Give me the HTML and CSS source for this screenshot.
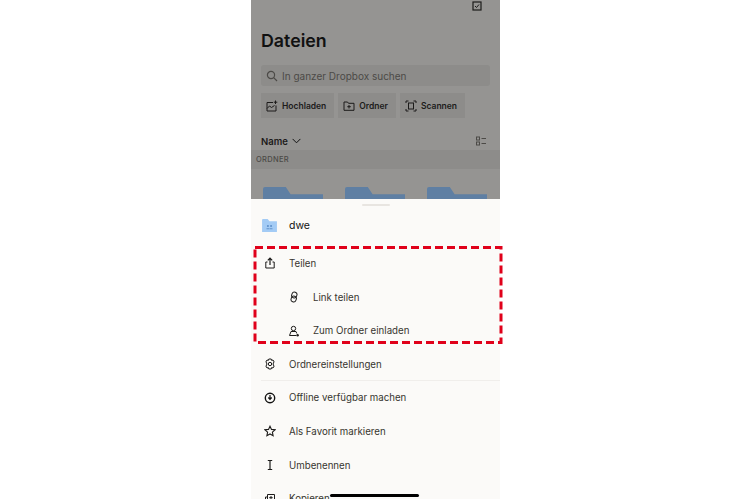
FILE: index.html
```html
<!DOCTYPE html>
<html lang="de">
<head>
  <meta charset="UTF-8" />
  <title>Dateien</title>
  <link rel="stylesheet" href="styles.css">
</head>
<body>
  <div class="phone">
    <div class="files">
      <div class="top-bar">
        <svg class="select-icon" viewBox="0 0 10 10"><rect x="1" y="1" width="8" height="8" fill="none" stroke="#1c1b1a" stroke-width="1.200"/><path d="M3 5l1.500 1.500L7 3.500" fill="none" stroke="#1c1b1a"/></svg>
      </div>
      <h1>Dateien</h1>
      <div class="search">
        <svg class="ico" viewBox="0 0 12 12"><circle cx="5" cy="5" r="3.600" fill="none" stroke="#4c4a47" stroke-width="1.200"/><path d="M7.700 7.700L11 11" stroke="#4c4a47" stroke-width="1.200"/></svg>
        <span>In ganzer Dropbox suchen</span>
      </div>
      <div class="actions">
        <div class="action">
          <svg class="ico" viewBox="0 0 12 12"><path d="M7 2.500H1v8.500h9V5.500" fill="none" stroke="#1c1b1a"/><path d="M1 8.500l2.500-2.500 2 1.500L8.500 5.500" fill="none" stroke="#1c1b1a"/><path d="M9.500 .5v3.500M7.800 2.200h3.500" stroke="#1c1b1a"/></svg>
          <span>Hochladen</span>
        </div>
        <div class="action">
          <svg class="ico" viewBox="0 0 12 12"><path d="M1 2h3.500l1 1.300H11v7H1z" fill="none" stroke="#1c1b1a"/><path d="M6 5v3.500M4.300 6.700h3.500" stroke="#1c1b1a"/></svg>
          <span>Ordner</span>
        </div>
        <div class="action">
          <svg class="ico" viewBox="0 0 12 12"><path d="M1 3V1h2.500M8.500 1H11v2M11 9v2H8.500M3.500 11H1V9" fill="none" stroke="#1c1b1a"/><rect x="3.500" y="3" width="5" height="6" fill="none" stroke="#1c1b1a"/></svg>
          <span>Scannen</span>
        </div>
      </div>
      <div class="sort-row">
        <div class="sort">
          <span>Name</span>
          <svg class="chevron" viewBox="0 0 10 6"><path d="M.7 .7L5 5l4.300-4.300" fill="none" stroke="#111" stroke-width="1.100"/></svg>
        </div>
        <svg class="view-icon" viewBox="0 0 10 10"><rect x=".5" y="1" width="3" height="3" fill="none" stroke="#4c4a47"/><rect x=".5" y="6" width="3" height="3" fill="none" stroke="#4c4a47"/><path d="M5.500 2.500H10M5.500 7.500H10" stroke="#4c4a47"/></svg>
      </div>
      <div class="section">ORDNER</div>
      <div class="folders">
        <div class="folder"></div>
        <div class="folder"></div>
        <div class="folder"></div>
      </div>
    </div>

    <div class="sheet">
      <div class="grabber"></div>
      <div class="sheet-head">
        <svg class="folder-icon" viewBox="0 0 16 14"><path d="M0 1a1 1 0 0 1 1-1h5l2 2.500h8V14H0z" fill="#a3cbf5"/><circle cx="6.300" cy="7.500" r="1.100" fill="#5d8fc9"/><circle cx="9.700" cy="7.500" r="1.100" fill="#5d8fc9"/><path d="M4.800 10.500h3M8.200 10.500h3" stroke="#5d8fc9"/></svg>
        <span>dwe</span>
      </div>
      <ul class="menu">
        <li>
          <svg class="ico" viewBox="0 0 12 12"><path d="M3.500 5H1.800v6h8.400V5H8.500" fill="none" stroke="#1c1b1a"/><path d="M6 8V1.300M3.800 3.300L6 1l2.200 2.300" fill="none" stroke="#1c1b1a" stroke-width="1.200"/></svg>
          <span>Teilen</span>
        </li>
        <li class="sub">
          <svg class="ico" viewBox="0 0 12 12"><rect x="3.800" y="1" width="5" height="6" rx="2.500" transform="rotate(20 6.300 4)" fill="none" stroke="#1c1b1a"/><rect x="3.200" y="5" width="5" height="6" rx="2.500" transform="rotate(20 5.700 8)" fill="none" stroke="#1c1b1a"/></svg>
          <span>Link teilen</span>
        </li>
        <li class="sub">
          <svg class="ico" viewBox="0 0 12 12"><circle cx="5.500" cy="3.500" r="2.200" fill="none" stroke="#1c1b1a"/><path d="M3 6.500h5l.8 2M3 6.500l-1.500 4h6.500" fill="none" stroke="#1c1b1a"/><circle cx="9.600" cy="10.300" r="1.200" fill="#1c1b1a"/></svg>
          <span>Zum Ordner einladen</span>
        </li>
        <li class="divided">
          <svg class="ico" viewBox="0 0 12 12"><path d="M4.800 1h2.400l.4 1.400 1.400-.4 1.200 2-1 1 .1 1-.1 1 1 1-1.200 2-1.400-.4-.4 1.400H4.800l-.4-1.400-1.400.4-1.200-2 1-1L2.700 6l.1-1-1-1L3 2l1.400.4z" fill="none" stroke="#1c1b1a"/><circle cx="6" cy="6" r="1.700" fill="none" stroke="#1c1b1a"/></svg>
          <span>Ordnereinstellungen</span>
        </li>
        <li>
          <svg class="ico" viewBox="0 0 12 12"><circle cx="6" cy="6" r="4.700" fill="none" stroke="#111" stroke-width="1.400"/><path d="M6 3v4.200M4.300 5.500L6 7.400l1.700-1.900" fill="none" stroke="#111" stroke-width="1.200"/></svg>
          <span>Offline verfügbar machen</span>
        </li>
        <li>
          <svg class="ico" viewBox="0 0 12 12"><path d="M6 1.200l1.500 3.200 3.500.4-2.600 2.400.7 3.500L6 9l-3.100 1.700.7-3.500L1 4.800l3.500-.4z" fill="none" stroke="#1c1b1a" stroke-width="1.100"/></svg>
          <span>Als Favorit markieren</span>
        </li>
        <li>
          <svg class="ico" viewBox="0 0 12 12"><path d="M3.800 1.500h4.400M3.800 10.500h4.400M6 1.500v9" fill="none" stroke="#1c1b1a" stroke-width="1.200"/></svg>
          <span>Umbenennen</span>
        </li>
        <li>
          <svg class="ico" viewBox="0 0 12 12"><path d="M3.500 1.500h7v7h-7z" fill="none" stroke="#1c1b1a"/><path d="M3.500 4H1.500v6.500H8V8.500M7 3v3.500M5.200 4.700h3.500" fill="none" stroke="#1c1b1a"/></svg>
          <span>Kopieren</span>
        </li>
      </ul>
    </div>

    <svg class="highlight" viewBox="0 0 250 98"><rect x="2" y="1.500" width="246" height="95" fill="none" stroke="#e0001a" stroke-width="3" stroke-dasharray="8 4"/></svg>
    <div class="home-bar"></div>
  </div>
</body>
</html>
```

FILE: styles.css
```css
* {
  box-sizing: border-box;
  margin: 0;
  padding: 0;
}

body {
  font-family: Inter, 'Noto Sans', sans-serif;
  background: #fff;
  color: #1c1b1a;
  height: 499px;
  overflow: hidden;
}

.phone {
  position: relative;
  width: 249px;
  height: 499px;
  margin-left: 251px;
  background: #959492;
  display: flex;
  flex-direction: column;
}

.files {
  height: 199px;
  flex-shrink: 0;
  overflow: hidden;
}

.top-bar {
  display: flex;
  justify-content: flex-end;
  height: 11px;
  padding-right: 18px;
}

.select-icon {
  width: 10px;
  height: 10px;
  margin-top: 1px;
}

h1 {
  font-size: 17.800px;
  font-weight: 600;
  line-height: 22px;
  color: #111;
  margin: 18.500px 0 13.500px 10px;
}

.ico {
  width: 12px;
  height: 12px;
  flex-shrink: 0;
}

.search {
  display: flex;
  align-items: center;
  gap: 4px;
  height: 21px;
  margin: 0 10px 7px;
  padding-left: 5px;
  border-radius: 3px;
  background: #8d8c8a;
  font-size: 10px;
  color: #4c4a47;
}

.actions {
  display: flex;
  gap: 4px;
  margin-left: 10px;
}

.action {
  display: flex;
  align-items: center;
  gap: 4px;
  height: 25px;
  padding: 0 8px 0 5px;
  background: #8d8c8a;
  font-size: 8.500px;
  font-weight: 600;
}

.sort-row {
  display: flex;
  align-items: center;
  justify-content: space-between;
  height: 18px;
  margin-top: 14px;
  padding: 0 14px 0 10px;
}

.sort {
  display: flex;
  align-items: center;
  gap: 4px;
  font-size: 9.500px;
  font-weight: 600;
}

.chevron {
  width: 9px;
  height: 6px;
}

.view-icon {
  width: 10px;
  height: 10px;
}

.section {
  height: 19px;
  line-height: 19px;
  padding-left: 5px;
  background: #8d8c8a;
  font-size: 7.500px;
  font-weight: 500;
  letter-spacing: .3px;
  color: #4c4a47;
}

.folders {
  display: flex;
  gap: 22px;
  margin-top: 18px;
  padding-left: 12px;
}

.folder {
  width: 60px;
  height: 40px;
  background: #5f7fa3;
  border-radius: 2px;
  clip-path: polygon(0 0, 38% 0, 46% 18%, 100% 18%, 100% 100%, 0 100%);
}

.sheet {
  flex: 1;
  background: #fbfaf8;
  overflow: hidden;
}

.grabber {
  width: 28px;
  height: 2px;
  margin: 5px auto 0;
  border-radius: 1px;
  background: #e8e5e1;
}

.sheet-head {
  display: flex;
  align-items: center;
  gap: 12px;
  height: 33px;
  margin-top: 3px;
  padding-left: 11px;
  font-size: 10.500px;
  font-weight: 400;
  color: #111;
}

.folder-icon {
  width: 15px;
  height: 13px;
}

.menu {
  list-style: none;
  margin-top: 4.700px;
}

.menu li {
  display: flex;
  align-items: center;
  gap: 13px;
  height: 33.600px;
  padding-left: 13px;
  font-size: 9.700px;
  color: #37352f;
}

.menu li.sub {
  padding-left: 37px;
}

.menu li.divided {
  position: relative;
}

.menu li.divided::after {
  content: "";
  position: absolute;
  left: 10px;
  right: 0;
  bottom: 0;
  height: 1px;
  background: #f0eeeb;
}

.highlight {
  position: absolute;
  left: 2px;
  top: 246px;
  width: 250px;
  height: 98px;
}

.home-bar {
  position: absolute;
  left: 79px;
  top: 494px;
  width: 89px;
  height: 3px;
  border-radius: 2px;
  background: #000;
}
```
